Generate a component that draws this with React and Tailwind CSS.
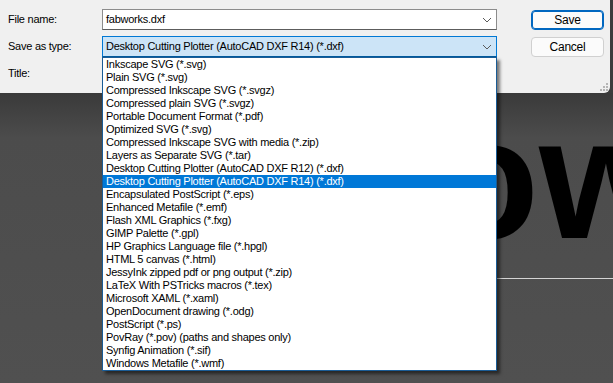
import { useState } from 'react'

const fileTypes = [
  'Inkscape SVG (*.svg)',
  'Plain SVG (*.svg)',
  'Compressed Inkscape SVG (*.svgz)',
  'Compressed plain SVG (*.svgz)',
  'Portable Document Format (*.pdf)',
  'Optimized SVG (*.svg)',
  'Compressed Inkscape SVG with media (*.zip)',
  'Layers as Separate SVG (*.tar)',
  'Desktop Cutting Plotter (AutoCAD DXF R12) (*.dxf)',
  'Desktop Cutting Plotter (AutoCAD DXF R14) (*.dxf)',
  'Encapsulated PostScript (*.eps)',
  'Enhanced Metafile (*.emf)',
  'Flash XML Graphics (*.fxg)',
  'GIMP Palette (*.gpl)',
  'HP Graphics Language file (*.hpgl)',
  'HTML 5 canvas (*.html)',
  'JessyInk zipped pdf or png output (*.zip)',
  'LaTeX With PSTricks macros (*.tex)',
  'Microsoft XAML (*.xaml)',
  'OpenDocument drawing (*.odg)',
  'PostScript (*.ps)',
  'PovRay (*.pov) (paths and shapes only)',
  'Synfig Animation (*.sif)',
  'Windows Metafile (*.wmf)',
]

function Chevron() {
  return (
    <svg width="10" height="6" viewBox="0 0 10 6" className="shrink-0">
      <path d="M1 1l4 4 4-4" fill="none" stroke="#5a5a5a" strokeWidth="1" />
    </svg>
  )
}

function Grip() {
  return (
    <svg width="8" height="8" viewBox="0 0 8 8">
      <g fill="#b5b5b5">
        <rect x="6" y="0" width="2" height="2" />
        <rect x="3" y="3" width="2" height="2" />
        <rect x="6" y="3" width="2" height="2" />
        <rect x="0" y="6" width="2" height="2" />
        <rect x="3" y="6" width="2" height="2" />
        <rect x="6" y="6" width="2" height="2" />
      </g>
    </svg>
  )
}

export default function App() {
  const [selected] = useState(9)

  return (
    <div className="relative w-[613px] h-[383px] overflow-hidden bg-[#3c3c3c] font-['Liberation_Sans',Arial,sans-serif] text-[11px] tracking-[-0.25px] text-black">
      {/* dialog */}
      <div className="relative h-[93px] w-[610px] bg-[#f0f0f0] rounded-br-[6px] pt-[9px] pl-[8px] flex flex-col gap-[6px]">
        <div className="flex items-center h-[21px]">
          <span className="w-[94px]">File name:</span>
          <div className="w-[395px] h-[21px] bg-white border border-[#8c8c8c] border-b-[#5c5c5c] flex items-center justify-between pl-[3px] pr-[4px]">
            <span>fabworks.dxf</span>
            <Chevron />
          </div>
          <button className="ml-[34px] w-[73px] h-[20px] rounded-[4px] border border-[#0067c0] bg-[#fbfbfb] shadow-[inset_0_0_0_1px_#0067c0] text-[12px]">
            Save
          </button>
        </div>
        <div className="flex items-center h-[21px]">
          <span className="w-[94px]">Save as type:</span>
          <div className="w-[395px] h-[21px] bg-[#cce4f7] border border-[#0078d4] border-b-[#005a9e] flex items-center justify-between pl-[3px] pr-[4px]">
            <span>Desktop Cutting Plotter (AutoCAD DXF R14) (*.dxf)</span>
            <Chevron />
          </div>
          <button className="ml-[34px] w-[73px] h-[20px] rounded-[4px] border border-[#d0d0d0] bg-[#fbfbfb] text-[12px]">
            Cancel
          </button>
        </div>
        <div className="flex items-center h-[21px]">
          <span className="w-[94px]">Title:</span>
        </div>
        <div className="absolute right-[2px] bottom-[2px]">
          <Grip />
        </div>
      </div>

      {/* canvas behind the dialog */}
      <div className="relative h-[290px] bg-[linear-gradient(to_bottom,#3a3a3a,#4c4c4c_45px,#505050)]">
        <div className="absolute left-[434px] top-[-1px] text-[172px] leading-none font-bold tracking-normal text-black font-['Liberation_Sans',Arial,sans-serif]">
          ow
        </div>
        <div className="absolute left-[130px] right-0 top-[185px] h-px bg-[#d4d4d4]" />
      </div>

      {/* open dropdown list */}
      <div className="absolute left-[102px] top-[57px] w-[395px] h-[314px] bg-white border border-[#1a5c96] shadow-[3px_3px_3px_rgba(0,0,0,0.5)]">
        {fileTypes.map((t, i) => (
          <div
            key={t}
            className={
              i === selected
                ? 'h-[13px] leading-[13px] pl-[3px] bg-[#0078d7] text-white whitespace-nowrap'
                : 'h-[13px] leading-[13px] pl-[3px] whitespace-nowrap'
            }
          >
            {t}
          </div>
        ))}
      </div>
    </div>
  )
}
